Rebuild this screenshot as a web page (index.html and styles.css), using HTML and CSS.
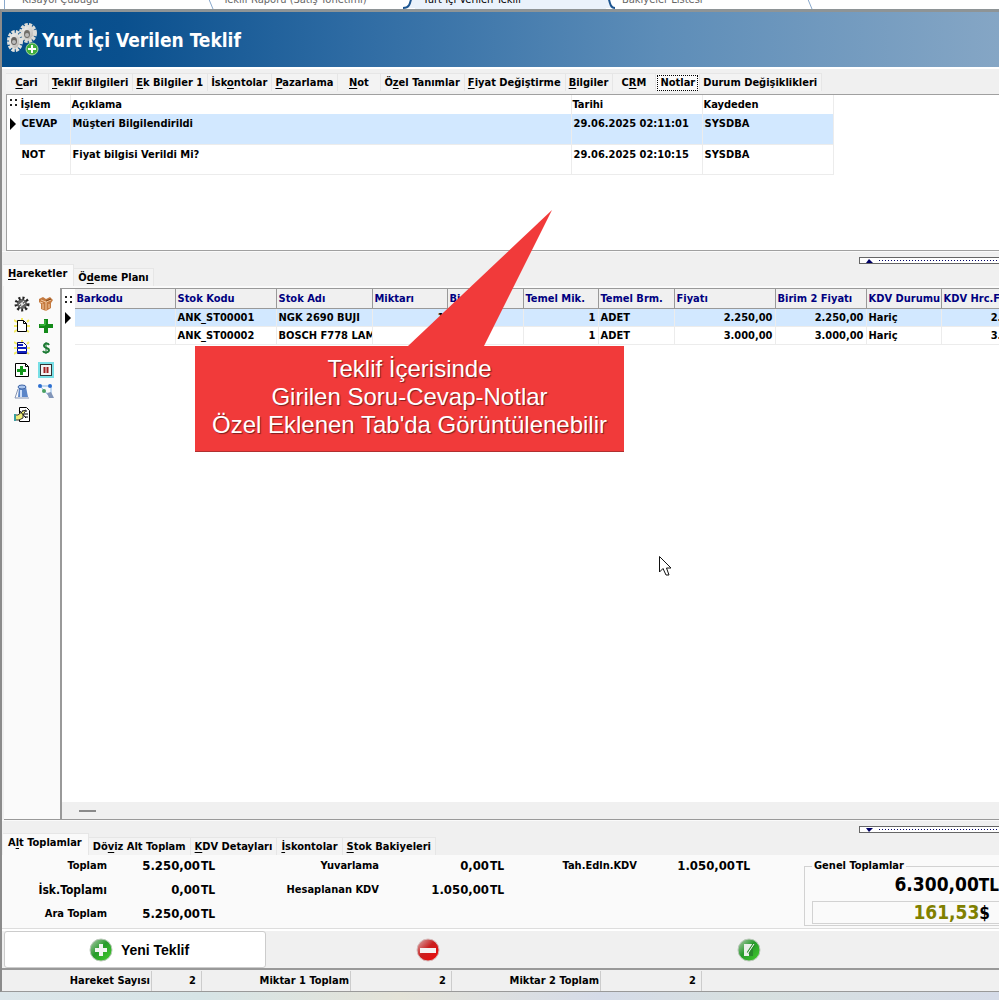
FILE: index.html
```html
<!DOCTYPE html>
<html lang="tr">
<head>
<meta charset="utf-8">
<title>Yurt İçi Verilen Teklif</title>
<link rel="stylesheet" href="styles.css">
</head>
<body>
<nav class="windows">
  <button class="window w1">Kısayol Çubuğu</button>
  <svg class="edge" width="16" height="24" viewBox="0 0 16 24"><path d="M5 12L10 24" fill="none" stroke="#8aa9cc"/></svg>
  <button class="window w2">Teklif Raporu (Satış Yönetimi)</button>
  <svg class="edge" width="16" height="24" viewBox="0 0 16 24"><path d="M14 8C12 22 10 23 4 23H16V8Z" fill="#eaf2fb"/><path d="M13 10C11 20 10 23 4 23" fill="none" stroke="#1d5590" stroke-width="2"/></svg>
  <button class="window w3">Yurt İçi Verilen Teklif</button>
  <svg class="edge" width="16" height="24" viewBox="0 0 16 24"><path d="M0 8H3C4 20 5 23 9 23H0Z" fill="#eaf2fb"/><path d="M2 10C4 20 5 23 9 23" fill="none" stroke="#1d5590" stroke-width="2"/></svg>
  <button class="window w4">Bakiyeler Listesi</button>
  <svg class="edge" width="16" height="24" viewBox="0 0 16 24"><path d="M2 12L7 24" fill="none" stroke="#8aa9cc"/></svg>
</nav>
<main class="app">
  <header class="title">
    <svg class="gears" width="34" height="34" viewBox="0 0 34 34">
      <defs><linearGradient id="metal" x1="0" y1="0" x2="1" y2="1"><stop offset="0" stop-color="#fff"/><stop offset="1" stop-color="#a9a7a2"/></linearGradient></defs>
      <ellipse cx="22" cy="10" rx="7" ry="8" fill="url(#metal)"/>
      <ellipse cx="22" cy="10" rx="7" ry="8" fill="none" stroke="#dcdcd8" stroke-width="4" stroke-dasharray="3 1"/>
      <ellipse cx="21" cy="11" rx="3" ry="4" fill="#706d68"/><circle cx="21" cy="12" r="2" fill="#bbb"/>
      <ellipse cx="9" cy="18" rx="6" ry="8" fill="url(#metal)"/>
      <ellipse cx="9" cy="18" rx="6" ry="9" fill="none" stroke="#e2e2de" stroke-width="4" stroke-dasharray="3 1"/>
      <ellipse cx="8" cy="18" rx="3" ry="4" fill="#66635f"/><circle cx="8" cy="19" r="2" fill="#bbb"/>
      <circle cx="26" cy="26" r="6" fill="#3fae3c" stroke="#a6d9a0"/>
      <path d="M26 22V30M22 26H30" stroke="#fff" stroke-width="2"/>
    </svg>
    <h1>Yurt İçi Verilen Teklif</h1>
  </header>
  <nav class="tabs main-tabs">
    <button class="tab wide"><u>C</u>ari</button><button class="tab"><u>T</u>eklif Bilgileri</button><button class="tab"><u>E</u>k Bilgiler 1</button><button class="tab">İsk<u>o</u>ntolar</button><button class="tab"><u>P</u>azarlama</button><button class="tab wide"><u>N</u>ot</button><button class="tab">Ö<u>z</u>el Tanımlar</button><button class="tab"><u>F</u>iyat Değiştirme</button><button class="tab"><u>B</u>ilgiler</button><button class="tab wide">C<u>R</u>M</button><button class="tab active focus"><span>Notlar</span></button><button class="tab">Durum Değişiklikleri</button>
  </nav>
  <section class="notes">
    <table class="notes-table">
      <colgroup><col class="c12"><col class="c51"><col class="c501"><col class="c131"><col class="c131"></colgroup>
      <thead><tr><th class="grip"><svg width="9" height="8" viewBox="0 0 9 8"><path d="M1 0h2v2h-2zM6 0h2v2h-2zM1 5h2v2h-2zM6 5h2v2h-2z" fill="#222"/></svg></th><th>İşlem</th><th>Açıklama</th><th>Tarihi</th><th>Kaydeden</th></tr></thead>
      <tbody>
        <tr class="selected"><td class="grip"><svg width="7" height="12" viewBox="0 0 7 12"><path d="M1 0L7 6L1 12Z"/></svg></td><td>CEVAP</td><td>Müşteri Bilgilendirildi</td><td>29.06.2025 02:11:01</td><td>SYSDBA</td></tr>
        <tr><td class="grip"></td><td>NOT</td><td>Fiyat bilgisi Verildi Mi?</td><td>29.06.2025 02:10:15</td><td>SYSDBA</td></tr>
      </tbody>
    </table>
  </section>
  <div class="split">
    <div class="handle"><svg width="7" height="4" viewBox="0 0 7 4"><path d="M0 4L3 0L7 4Z" fill="#006"/></svg><i></i></div>
  </div>
  <nav class="tabs low-tabs"><button class="tab active"><u>H</u>areketler</button><button class="tab">Ö<u>d</u>eme Planı</button></nav>
  <section class="lines">
    <aside class="tools">
      <button aria-label="Ayarlar"><svg viewBox="0 0 16 16"><circle cx="8" cy="8" r="5" fill="#666"/><circle cx="8" cy="8" r="6" fill="none" stroke="#222" stroke-width="3" stroke-dasharray="2 2"/><path d="M5 9l5-4M6 11l5-4" stroke="#eee"/><circle cx="8" cy="8" r="1" fill="#fff"/></svg></button>
      <button aria-label="Stok"><svg viewBox="0 0 16 16"><path d="M1 3L5 1L8 3L12 1L15 4L13 7V12L8 15L3 13V8L1 6Z" fill="#c47a40"/><path d="M3 4L8 6L13 4M8 6V15M5 8V13M11 8V12M2 6l3 1" fill="none" stroke="#f2c9a0"/><path d="M8 5L13 3" stroke="#814718"/></svg></button>
      <button aria-label="Yeni"><svg viewBox="0 0 16 16"><path d="M0 2l3 2M8 0v3M15 2l-2 2M0 14l3-2M15 14l-3-2M0 8h3M13 8h3" stroke="#f4ec62" stroke-width="2"/><path d="M3.500 2.500H9.500L12.500 5.500V13.500H3.500Z" fill="#fff" stroke="#000"/><path d="M9.500 2.500V5.500H12.500" fill="none" stroke="#000"/></svg></button>
      <button aria-label="Ekle"><svg viewBox="0 0 16 16"><path d="M6 1H10V6H15V10H10V15H6V10H1V6H6Z" fill="#128a18"/><path d="M7 2V7H2" fill="none" stroke="#4fd050"/></svg></button>
      <button aria-label="Kopyala"><svg viewBox="0 0 16 16"><path d="M0 2l3 2M8 0v3M15 2l-2 2M0 14l3-2M15 14l-3-2M0 8h3M13 8h3" stroke="#f4ec62" stroke-width="2"/><path d="M3.500 2.500H9.500L12.500 5.500V13.500H3.500Z" fill="#fff" stroke="#006"/><path d="M4 5h5M3 8h10M3 12h10" stroke="#1020c0" stroke-width="2"/></svg></button>
      <button aria-label="Döviz"><svg viewBox="0 0 16 16"><path d="M11 5C10 3 6 3 6 6C6 8 11 8 11 10C11 13 6 13 5 11" fill="none" stroke="#1c7a34" stroke-width="2"/><path d="M8 2V14" stroke="#1c7a34"/></svg></button>
      <button aria-label="Satır ekle"><svg viewBox="0 0 16 16"><path d="M1.500 1.500H11.500L14.500 4.500V14.500H1.500Z" fill="#fff" stroke="#000"/><path d="M11.500 1.500V4.500H14.500" fill="none" stroke="#000"/><path d="M6 4H9V7H12V10H9V13H6V10H3V7H6Z" fill="#12961c"/></svg></button>
      <button aria-label="Durdur"><svg viewBox="0 0 16 16"><rect x="1" y="1" width="14" height="14" fill="#fff" stroke="#78dfe6" stroke-width="2"/><rect x="2.500" y="2.500" width="11" height="11" fill="#f4f4f4" stroke="#333"/><path d="M6.500 5V11M9.500 5V11" stroke="#a02020" stroke-width="2"/></svg></button>
      <button aria-label="Depo"><svg viewBox="0 0 16 16"><path d="M5 3H12L14 13H4Z" fill="#5c86c8"/><ellipse cx="8" cy="3" rx="4" ry="2" fill="#a9c5ee" stroke="#3c62a4"/><path d="M7 6V13" stroke="#cfe0fa" stroke-width="2"/><path d="M1 14L4 5M1 14H15" stroke="#8695b4"/></svg></button>
      <button aria-label="Bağlantılar"><svg viewBox="0 0 16 16"><path d="M2 2H13M2 2L12 13M13 2V10" fill="none" stroke="#8ab8e8"/><circle cx="2" cy="2" r="2" fill="#2c6fd0"/><circle cx="12" cy="2" r="2" fill="#2c6fd0"/><circle cx="6" cy="7" r="2" fill="#48a060"/><path d="M9 9l4-1l3 6h-5z" fill="#8195b8"/></svg></button>
      <button aria-label="Düzenle"><svg viewBox="0 0 16 16"><path d="M5.500 1.500H12.500L15.500 4.500V15.500H5.500Z" fill="#fff" stroke="#000"/><path d="M8 5h5M10 8h4M11 11h3" stroke="#000"/><path d="M1 9H4L9 5L12 4L9 9V12L5 14H1Z" fill="#f0ed78" stroke="#333"/><path d="M5 4L12 12" stroke="#000"/><path d="M0 8h2v7h-2z" fill="#3ca0a0"/></svg></button>
    </aside>
    <div class="grid">
      <table class="lines-table">
        <colgroup><col class="c12"><col class="c101"><col class="c101"><col class="c96"><col class="c75"><col class="c76"><col class="c75"><col class="c76"><col class="c101"><col class="c91"><col class="c75"><col class="c101"></colgroup>
        <thead><tr><th class="grip"><svg width="9" height="8" viewBox="0 0 9 8"><path d="M1 0h2v2h-2zM6 0h2v2h-2zM1 5h2v2h-2zM6 5h2v2h-2z" fill="#222"/></svg></th><th>Barkodu</th><th>Stok Kodu</th><th>Stok Adı</th><th>Miktarı</th><th>Birim</th><th>Temel Mik.</th><th>Temel Brm.</th><th>Fiyatı</th><th>Birim 2 Fiyatı</th><th>KDV Durumu</th><th>KDV Hrc.Fiyatı</th></tr></thead>
        <tbody>
          <tr class="selected"><td class="grip"><svg width="7" height="12" viewBox="0 0 7 12"><path d="M1 0L7 6L1 12Z"/></svg></td><td></td><td>ANK_ST00001</td><td>NGK 2690 BUJI</td><td class="num">1</td><td></td><td class="num">1</td><td>ADET</td><td class="num">2.250,00</td><td class="num">2.250,00</td><td>Hariç</td><td class="num">2.250,00</td></tr>
          <tr><td class="grip"></td><td></td><td>ANK_ST00002</td><td>BOSCH F778 LAMBA</td><td class="num">1</td><td></td><td class="num">1</td><td>ADET</td><td class="num">3.000,00</td><td class="num">3.000,00</td><td>Hariç</td><td class="num">3.000,00</td></tr>
        </tbody>
      </table>
      <div class="scroll"><i></i></div>
    </div>
  </section>
  <div class="split">
    <div class="handle"><svg width="7" height="4" viewBox="0 0 7 4"><path d="M0 0L3 4L7 0Z" fill="#006"/></svg><i></i></div>
  </div>
  <nav class="tabs low-tabs"><button class="tab active">A<u>l</u>t Toplamlar</button><button class="tab">Dö<u>v</u>iz Alt Toplam</button><button class="tab"><u>K</u>DV Detayları</button><button class="tab"><u>İ</u>skontolar</button><button class="tab"><u>S</u>tok Bakiyeleri</button></nav>
  <section class="totals">
    <dl class="sums">
      <dt>Toplam</dt><dd>5.250,00</dd><dd class="cur">TL</dd><dt>Yuvarlama</dt><dd>0,00</dd><dd class="cur">TL</dd><dt>Tah.Edln.KDV</dt><dd>1.050,00</dd><dd class="cur">TL</dd>
      <dt class="first big">İsk.Toplamı</dt><dd>0,00</dd><dd class="cur">TL</dd><dt>Hesaplanan KDV</dt><dd>1.050,00</dd><dd class="cur">TL</dd>
      <dt class="first">Ara Toplam</dt><dd>5.250,00</dd><dd class="cur">TL</dd>
    </dl>
    <fieldset class="grand">
      <legend>Genel Toplamlar</legend>
      <p>6.300,00<span>TL</span></p>
      <div class="usd"><b>161,53</b><span>$</span></div>
    </fieldset>
  </section>
  <div class="actions">
    <button class="primary"><svg width="24" height="24" viewBox="0 0 24 24"><defs><linearGradient id="green" x1="0" y1="0" x2="1" y2="1"><stop offset="0" stop-color="#b9cdb8"/><stop offset=".45" stop-color="#279b2b"/><stop offset="1" stop-color="#45d02c"/></linearGradient></defs><circle cx="12" cy="12" r="11" fill="url(#green)" stroke="#bcc9bb"/><path d="M12 6V18M6 12H18" stroke="#f2f4f2" stroke-width="4"/></svg>Yeni Teklif</button>
    <button aria-label="Sil"><svg width="24" height="24" viewBox="0 0 24 24"><defs><linearGradient id="red" x1="0" y1="0" x2="1" y2="1"><stop offset="0" stop-color="#dcb9b9"/><stop offset=".45" stop-color="#c92020"/><stop offset="1" stop-color="#f20808"/></linearGradient></defs><circle cx="12" cy="12" r="11" fill="url(#red)" stroke="#d6bcbc"/><rect x="4" y="10" width="16" height="5" fill="#f6f2f2"/></svg></button>
    <button aria-label="Çıkış"><svg width="24" height="24" viewBox="0 0 24 24"><circle cx="12" cy="12" r="11" fill="url(#green)" stroke="#bcc9bb"/><path d="M7 6H16V18H7Z" fill="#e9efe9"/><path d="M16 8L12 13V18H16Z" fill="#2a8a2c"/><path d="M17 6L11 15" stroke="#2a8a2c" stroke-width="3"/><path d="M17 6L11 15" stroke="#fff"/></svg></button>
  </div>
  <footer class="status"><span>Hareket Sayısı</span><output>2</output><span>Miktar 1 Toplam</span><output>2</output><span>Miktar 2 Toplam</span><output>2</output></footer>
</main>
<div class="callout">
  <svg width="145" height="136" viewBox="0 0 145 136"><path d="M144 0L76 136H0Z" fill="#f13a3a"/></svg>
  <p>Teklif İçerisinde<br>Girilen Soru-Cevap-Notlar<br>Özel Eklenen Tab'da Görüntülenebilir</p>
</div>
<svg class="pointer" width="13" height="20" viewBox="0 0 13 20"><path d="M.5 .5V16L4 12.500L7 19H10L7.500 12H12Z" fill="#fff" stroke="#111"/></svg>
</body>
</html>
```
FILE: styles.css
```css
* { box-sizing: border-box; }
body {
  margin: 0;
  padding-right: 1px;
  min-height: 100vh;
  display: flex;
  flex-direction: column;
  position: relative;
  overflow: hidden;
  background: #fff;
  color: #000;
  font: bold 11px/14px "DejaVu Sans Condensed", "DejaVu Sans", sans-serif;
}
body::after { content: ""; height: 8px; background: linear-gradient(90deg, #dce6ea, #d6e4e6 20%, #e4e3d8 40%, #d5dbe8 60%, #d7e0df 75%, #d5dbe8); }
button { font: inherit; color: inherit; background: none; border: 0; padding: 0; margin: 0; }
table { border-collapse: collapse; table-layout: fixed; }
p, h1, dl, dd { margin: 0; }
svg { display: block; flex: none; }

.windows { display: flex; align-items: flex-end; height: 9px; overflow: hidden; padding-left: 4px; }
.window { flex: none; height: 24px; padding: 0 0 6px 17px; line-height: 18px; text-align: left; font-weight: normal; color: #666; white-space: nowrap; }
.w1 { width: 199px; border-left: 1px solid #8aa9cc; }
.w2 { width: 180px; padding-left: 4px; }
.w3 { width: 191px; padding-left: 8px; background: #eaf2fb; color: #000; }
.w4 { width: 183px; padding-left: 0; }
.window { padding-top: 6px; padding-bottom: 0; }

.app { flex: 1; display: flex; flex-direction: column; background: #f0f0f0; border-left: 2px solid #8b8b8b; border-top: 3px solid #8e9496; border-bottom: 1px solid #999; min-width: 0; }
.title { display: flex; align-items: center; gap: 2px; height: 56px; padding-left: 4px; background: linear-gradient(90deg, #034c8a 0, #0a508e 12%, #2e6ba3 35%, #5d8db8 66%, #85a6c5 100%); color: #fff; border-bottom: 1px solid #fff; }
.title h1 { font-size: 19px; line-height: 24px; }

.tabs { display: flex; align-items: flex-end; white-space: nowrap; }
.tab { height: 18px; padding: 0 4px; border: 1px solid #e6e6e6; border-width: 1px 1px 0 0; background: #f3f3f3; }
.tab u { text-underline-offset: 2px; }
.tab.active { background: #fafafa; }
.main-tabs { height: 26px; padding: 2px 0 3px 4px; border-top: 1px solid #fff; }
.main-tabs .tab { padding: 0 4px 0 3px; }
.main-tabs .wide { min-width: 43px; }
.main-tabs .focus { padding: 0 1px; }
.focus span { display: block; border: 1px dotted #000; padding: 0 2px; }
.low-tabs { height: 22px; padding-left: 1px; }
.low-tabs .active { height: 22px; padding: 0 6px 3px 5px; }

.notes { height: 157px; margin-left: 4px; background: #fff; border: 1px solid #a0a0a0; border-right: 0; overflow: hidden; }
.notes-table { width: 826px; }
.notes-table th, .notes-table td { padding: 3px 2px 1px; text-align: left; vertical-align: top; border-right: 1px solid #ececec; white-space: nowrap; overflow: hidden; }
.notes-table th { height: 19px; padding: 3px 1px 1px; }
.notes-table td { height: 30px; border-bottom: 1px solid #ececec; }
.selected td { background: #d2e8ff; }
.notes-table .grip, .lines-table .grip, .selected .grip { background: #fff; padding: 4px 1px 0 2px; border-color: #fff; }
.lines-table .selected .grip { padding-top: 1px; }
.c12 { width: 12px; } .c51 { width: 51px; } .c501 { width: 501px; } .c131 { width: 131px; }
.c75 { width: 75px; } .c76 { width: 76px; } .c91 { width: 91px; } .c96 { width: 96px; } .c101 { width: 101px; }

.split { display: flex; justify-content: flex-end; height: 13px; padding-top: 5px; border-top: 1px solid #fafafa; }
.handle { display: flex; align-items: center; gap: 6px; width: 14%; height: 7px; padding-left: 6px; border: 1px solid #666; border-right: 0; background: #fff; }
.handle i { flex: 1; height: 1px; background: repeating-linear-gradient(90deg, #006 0 1px, #fff 1px 3px); }

.lines { flex: 1; display: flex; margin-left: 2px; border-top: 2px solid #fafafa; border-bottom: 1px solid #999; min-height: 200px; }
.tools { display: grid; grid-template-columns: 24px 24px; grid-auto-rows: 22px; width: 58px; padding: 5px 0 0 6px; background: #fafafa; border-right: 2px solid #999; }
.tools button { display: grid; place-items: center; }
.tools svg { width: 16px; height: 16px; }
.grid { flex: 1; min-width: 0; display: flex; flex-direction: column; align-items: flex-start; overflow: hidden; background: #fff; border-top: 1px solid #999; }
.lines-table { width: 980px; }
.lines-table th, .lines-table td { padding: 2px 2px 0; height: 18px; text-align: left; white-space: nowrap; overflow: hidden; border-right: 1px solid #ececec; border-bottom: 1px solid #ececec; }
.lines-table th { color: #000080; background: #f0f0f0; border-right: 1px solid #999; border-bottom: 1px solid #999; height: 19px; }
.lines-table .num { text-align: right; }
.scroll { width: 100%; height: 17px; margin-top: auto; padding: 8px 0 0 17px; background: #f0f0f0; }
.scroll i { display: block; width: 17px; height: 2px; background: #8a8a8a; }

.totals { display: flex; justify-content: space-between; height: 74px; background: #fafafa; border-bottom: 1px solid #ddd; overflow: hidden; }
.sums { display: grid; grid-template-columns: 105px 93px 15px 164px 110px 16px 132px 98px 18px; grid-auto-rows: 24px; line-height: 22px; white-space: nowrap; }
.sums dt { text-align: right; }
.sums .first { grid-column: 1; }
.sums .big { font-size: 12px; }
.sums dd { text-align: right; font-size: 13px; }
.sums .cur { text-align: left; padding-left: 1px; font-size: 12px; }
.grand { width: 195px; height: 66px; margin: 5px 0 0; padding: 0 0 0 7px; border: 1px solid #d2d2d2; border-right: 0; }
.grand legend { padding: 0 2px; line-height: 12px; }
.grand p { font-size: 19px; line-height: 24px; text-align: right; white-space: nowrap; }
.grand span { font-size: 17px; }
.usd { height: 23px; margin-top: 4px; border: 1px solid #d2d2d2; border-right: 0; padding-right: 9px; text-align: right; font-size: 19px; line-height: 20px; }
.usd b { color: #808000; }

.actions { display: grid; grid-template-columns: 266fr 320fr 322fr 89fr; height: 41px; border-top: 2px solid #fff; border-bottom: 2px solid #999; }
.actions button { display: flex; align-items: center; justify-content: center; gap: 8px; }
.actions .primary { margin: 0 2px; padding-left: 8px; background: #fff; border: 1px solid #ccc; border-radius: 3px; font: bold 14px/18px "Liberation Sans", sans-serif; }
.status { display: grid; grid-template-columns: 150px 50px 149px 101px 149px 101px; height: 21px; line-height: 20px; padding-top: 1px; text-align: right; }
.status span { padding-right: 1px; border-right: 1px solid #ccc; }
.status output { padding-right: 5px; border-right: 1px solid #ccc; }

.callout { position: absolute; left: 195px; top: 346px; width: 429px; padding: 9px 0 12px; background: #f13a3a; border-bottom: 1px solid #b03030; }
.callout svg { position: absolute; left: 213px; bottom: 100%; }
.callout p { color: #fff; font: 24px/28px "Liberation Sans", sans-serif; text-align: center; text-shadow: 1px 1px 1px #7a2020; white-space: nowrap; }
.pointer { position: absolute; left: 659px; top: 556px; }
```
